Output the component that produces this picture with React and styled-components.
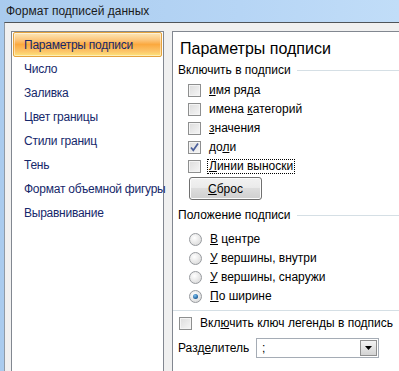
import React from 'react';
import styled, { createGlobalStyle } from 'styled-components';

const GlobalStyle = createGlobalStyle`
  html, body {
    margin: 0;
    padding: 0;
    background: #f0f0f0;
  }
  body {
    font-family: "Liberation Sans", Arial, sans-serif;
    font-size: 12px;
    color: #000;
  }
`;

// Window frame
const Window = styled.div`
  width: 399px;
  height: 371px;
  overflow: hidden;
  display: flex;
  flex-direction: column;
  background: linear-gradient(to right, #a9cbee, #b6d5f5 60%, #c1ddf8);
`;

const TitleBar = styled.div`
  height: 22px;
  flex: none;
  display: flex;
  align-items: center;
  padding-left: 6px;
  font-size: 12px;
  color: #1b1b1b;
`;

const Body = styled.div`
  flex: 1;
  margin-left: 4px;
  border-top: 1px solid #4f5459;
  border-left: 1px solid #8e9aa6;
  background: #f0f0f0;
  display: flex;
  align-items: flex-start;
  gap: 8px;
  padding: 8px 0 0 6px;
`;

// Left category list
const Sidebar = styled.ul`
  list-style: none;
  margin: 0;
  padding: 0;
  width: 151px;
  height: 360px;
  flex: none;
  background: #fff;
  border: 1px solid #828790;
`;

const NavItem = styled.li`
  box-sizing: border-box;
  height: ${p => (p.$active ? 25 : 24)}px;
  display: flex;
  align-items: center;
  padding-left: 10px;
  margin: 0 1px;
  white-space: nowrap;
  letter-spacing: -0.25px;
  color: #16286b;
  border-radius: 2px;
  border: 1px solid ${p => (p.$active ? '#e5a33d' : 'transparent')};
  background: ${p =>
    p.$active
      ? 'linear-gradient(to bottom, #fde7b9 0%, #fcc67c 30%, #fba93f 50%, #fcc56a 80%, #fde57c 100%)'
      : 'transparent'};
  box-shadow: ${p => (p.$active ? 'inset 0 0 0 1px rgba(255,255,255,0.45)' : 'none')};
`;

// Right options panel
const Panel = styled.div`
  width: 260px;
  height: 360px;
  flex: none;
  background: #fff;
  border: 1px solid #828790;
  border-right: none;
  padding: 7px 0 0 5px;
  box-sizing: border-box;
`;

const Heading = styled.div`
  font-size: 16px;
  line-height: 20px;
  padding-left: 2px;
  margin-bottom: 2px;
`;

const GroupLabel = styled.div`
  display: flex;
  align-items: center;
  gap: 6px;
  height: 18px;
  margin-top: ${p => p.$top || 0}px;
  &::after {
    content: '';
    flex: 1;
    height: 1px;
    background: #d5dfe5;
  }
`;

const OptionList = styled.div`
  display: flex;
  flex-direction: column;
  padding: ${p => p.$top || 2}px 0 0 10px;
`;

const Row = styled.div`
  display: flex;
  align-items: center;
  height: 19px;
  gap: 6px;
`;

const CheckBox = styled.span`
  width: 11px;
  height: 11px;
  flex: none;
  border: 1px solid #8e8f8f;
  background: linear-gradient(135deg, #dcdcdc, #f6f6f6);
  box-shadow: inset 0 0 0 1px #f4f4f4;
  display: flex;
  align-items: center;
  justify-content: center;
`;

const Radio = styled.span`
  width: 11px;
  height: 11px;
  flex: none;
  border-radius: 50%;
  border: 1px solid #979a9e;
  background: radial-gradient(circle at 40% 35%, #ffffff, #dcdcdc 80%);
  display: flex;
  align-items: center;
  justify-content: center;
  margin-left: 1px;
  &::after {
    content: '';
    display: ${p => (p.$checked ? 'block' : 'none')};
    width: 5px;
    height: 5px;
    border-radius: 50%;
    background: radial-gradient(circle at 40% 35%, #7ec2f2, #1c5c97 70%, #0d3b6b);
  }
`;

const Label = styled.span`
  padding: 0 1px;
  border: 1px dotted ${p => (p.$focus ? '#000' : 'transparent')};
  line-height: 13px;
`;

const Button = styled.button`
  margin: 1px 0 0 1px;
  width: 73px;
  height: 23px;
  font: inherit;
  color: #000;
  border: 1px solid #707070;
  border-radius: 3px;
  background: linear-gradient(to bottom, #f2f2f2 0%, #ebebeb 45%, #dddddd 50%, #cfcfcf 100%);
  box-shadow: inset 0 0 0 1px #fcfcfc;
  padding: 0;
`;

const Separator = styled.div`
  height: 1px;
  background: #d5dfe5;
  margin: 4px 0 3px -5px;
`;

const LegendRow = styled(Row)`
  padding-left: 1px;
`;

const ComboRow = styled.div`
  display: flex;
  align-items: center;
  margin-top: 5px;
`;

const ComboLabel = styled.span`
  width: 78px;
  flex: none;
`;

const Combo = styled.div`
  width: 116px;
  height: 18px;
  border: 1px solid #a5acb5;
  display: flex;
  align-items: center;
  justify-content: space-between;
  padding-left: 5px;
  background: #fff;
`;

const ComboButton = styled.span`
  width: 17px;
  height: 16px;
  margin-right: 1px;
  border: 1px solid #8f8f8f;
  box-sizing: border-box;
  background: linear-gradient(to bottom, #f3f3f3, #e3e3e3 50%, #d3d3d3);
  display: flex;
  align-items: center;
  justify-content: center;
`;

const Check = () => (
  <svg width="11" height="11" viewBox="0 0 11 11">
    <path d="M2 5.5 L4.3 8.3 L9 1.6" fill="none" stroke="#4b5f9a" strokeWidth="1.7" />
  </svg>
);

const Arrow = () => (
  <svg width="7" height="4" viewBox="0 0 7 4">
    <path d="M0 0 H7 L3.5 4 Z" fill="#000" />
  </svg>
);

const categories = [
  'Параметры подписи',
  'Число',
  'Заливка',
  'Цвет границы',
  'Стили границ',
  'Тень',
  'Формат объемной фигуры',
  'Выравнивание',
];

const includeOptions = [
  { pre: '', key: 'и', post: 'мя ряда' },
  { pre: 'имена ', key: 'к', post: 'атегорий' },
  { pre: '', key: 'з', post: 'начения' },
  { pre: 'до', key: 'л', post: 'и', checked: true },
  { pre: '', key: 'Л', post: 'инии выноски', focus: true },
];

const positions = [
  { key: 'В', post: ' центре' },
  { key: 'У', post: ' вершины, внутри' },
  { key: 'У', post: ' вершины, снаружи' },
  { key: 'П', post: 'о ширине', checked: true },
];

export default function App() {
  return (
    <>
      <GlobalStyle />
      <Window>
        <TitleBar>Формат подписей данных</TitleBar>
        <Body>
          <Sidebar>
            {categories.map((c, i) => (
              <NavItem key={c} $active={i === 0}>{c}</NavItem>
            ))}
          </Sidebar>
          <Panel>
            <Heading>Параметры подписи</Heading>
            <GroupLabel>Включить в подписи</GroupLabel>
            <OptionList>
              {includeOptions.map((o, i) => (
                <Row key={i}>
                  <CheckBox>{o.checked && <Check />}</CheckBox>
                  <Label $focus={o.focus}>
                    {o.pre}<u>{o.key}</u>{o.post}
                  </Label>
                </Row>
              ))}
              <Button><u>С</u>брос</Button>
            </OptionList>
            <GroupLabel $top={6}>Положение подписи</GroupLabel>
            <OptionList $top={6}>
              {positions.map((p, i) => (
                <Row key={i}>
                  <Radio $checked={p.checked} />
                  <Label><u>{p.key}</u>{p.post}</Label>
                </Row>
              ))}
            </OptionList>
            <Separator />
            <LegendRow>
              <CheckBox />
              <Label>Вкл<u>ю</u>чить ключ легенды в подпись</Label>
            </LegendRow>
            <ComboRow>
              <ComboLabel>Разд<u>е</u>литель</ComboLabel>
              <Combo>
                <span>;</span>
                <ComboButton><Arrow /></ComboButton>
              </Combo>
            </ComboRow>
          </Panel>
        </Body>
      </Window>
    </>
  );
}
